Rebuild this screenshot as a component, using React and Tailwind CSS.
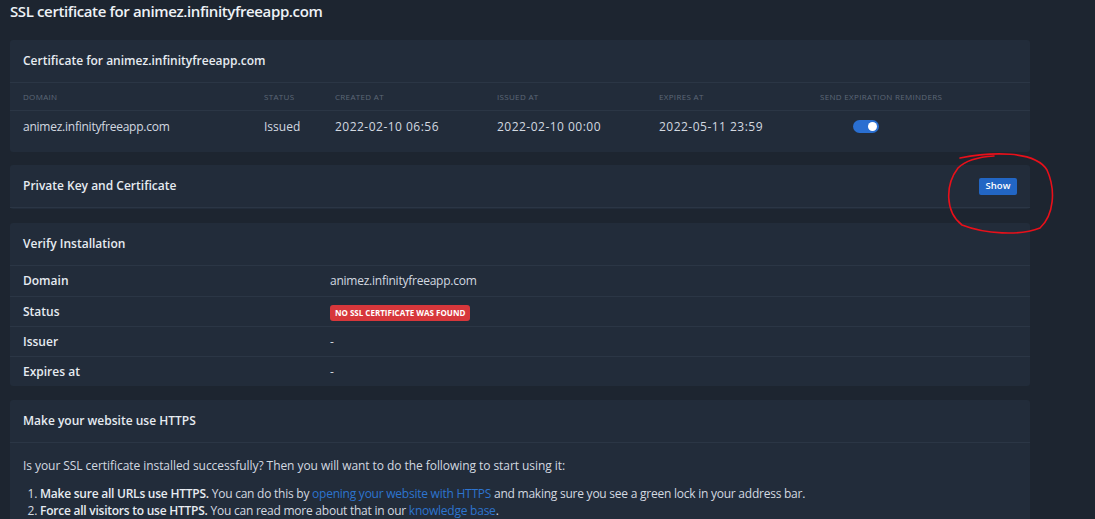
import React from "react";

const font = { fontFamily: '"Open Sans", "Noto Sans", sans-serif' };

const certRow = {
  domain: "animez.infinityfreeapp.com",
  status: "Issued",
  created: "2022-02-10 06:56",
  issued: "2022-02-10 00:00",
  expires: "2022-05-11 23:59",
};

const verifyRows = [
  { label: "Domain", value: "animez.infinityfreeapp.com" },
  { label: "Status", badge: "No SSL certificate was found" },
  { label: "Issuer", value: "-" },
  { label: "Expires at", value: "-" },
];

const CardHeader = ({ children, right }) => (
  <div className="flex h-[43px] items-center justify-between border-b border-[#2b3645] px-[13px]">
    <h2 className="text-[12px] font-semibold text-[#e6ebf1]">{children}</h2>
    {right}
  </div>
);

const Toggle = () => (
  <div className="ml-[33px] flex h-[13px] w-[26px] items-center justify-end rounded-full bg-[#2a6fd1] px-[2px]">
    <div className="h-[9px] w-[9px] rounded-full bg-white" />
  </div>
);

export default function App() {
  return (
    <div className="relative min-h-[519px] bg-[#1d2530] px-[10px] text-[#d3d9e0]" style={font}>
      <h1 className="flex h-[40px] items-start text-[15px] font-semibold leading-[22px] tracking-[-0.025em] text-[#eef2f6]">
        SSL certificate for animez.infinityfreeapp.com
      </h1>

      <div className="flex w-[1020px] flex-col gap-[14px]">
        {/* Certificate */}
        <div className="-mb-[1px] rounded-[3px] bg-[#222c3a] pb-[10px]">
          <CardHeader>Certificate for animez.infinityfreeapp.com</CardHeader>
          <div className="grid grid-cols-[241px_71px_162px_162px_161px_1fr] px-[13px] text-[8px] uppercase tracking-[0.04em] text-[#5d6877]">
            <div className="flex h-[27px] items-center">Domain</div>
            <div className="flex h-[27px] items-center">Status</div>
            <div className="flex h-[27px] items-center">Created at</div>
            <div className="flex h-[27px] items-center">Issued at</div>
            <div className="flex h-[27px] items-center">Expires at</div>
            <div className="flex h-[27px] items-center">Send expiration reminders</div>
          </div>
          <div className="grid h-[32px] grid-cols-[241px_71px_162px_162px_161px_1fr] items-center border-t border-[#2b3645] px-[13px] text-[12px]">
            <div className="tracking-[-0.02em]">{certRow.domain}</div>
            <div>{certRow.status}</div>
            <div className="tracking-[0.04em]">{certRow.created}</div>
            <div className="tracking-[0.04em]">{certRow.issued}</div>
            <div className="tracking-[0.04em]">{certRow.expires}</div>
            <div>
              <Toggle />
            </div>
          </div>
        </div>

        {/* Private key */}
        <div className="rounded-[3px] bg-[#222c3a] pb-[1px]">
          <CardHeader
            right={
              <button className="h-[17px] w-[38px] rounded-[2px] bg-[#2266c4] text-[9.5px] font-semibold text-white">
                Show
              </button>
            }
          >
            Private Key and Certificate
          </CardHeader>
        </div>

        {/* Verify */}
        <div className="rounded-[3px] bg-[#222c3a]">
          <CardHeader>Verify Installation</CardHeader>
          {verifyRows.map((row, i) => (
            <div
              key={row.label}
              className={
                "grid h-[30px] grid-cols-[307px_1fr] items-center px-[13px] text-[12px] " +
                (i > 0 ? "border-t border-[#2b3645]" : "")
              }
            >
              <div className="font-semibold text-[#e6ebf1]">{row.label}</div>
              <div className="tracking-[-0.02em]">
                {row.badge ? (
                  <span className="inline-flex h-[16px] items-center rounded-[3px] bg-[#d7373b] px-[5px] text-[8px] font-bold uppercase tracking-normal text-white">
                    {row.badge}
                  </span>
                ) : (
                  row.value
                )}
              </div>
            </div>
          ))}
        </div>

        {/* HTTPS */}
        <div className="rounded-[3px] bg-[#222c3a]">
          <CardHeader>Make your website use HTTPS</CardHeader>
          <div className="px-[13px] pt-[14px] pb-[16px] text-[12px]">
            <p className="leading-[17px] tracking-[-0.005em]">
              Is your SSL certificate installed successfully? Then you will want to do the following to start using it:
            </p>
            <ol className="mt-[11px] list-decimal pl-[17px] leading-[17px] tracking-[-0.02em]">
              <li>
                <strong className="font-semibold text-[#e6ebf1]">Make sure all URLs use HTTPS.</strong> You can do this by{" "}
                <a className="text-[#2d74cf]">opening your website with HTTPS</a> and making sure you see a green lock in your
                address bar.
              </li>
              <li>
                <strong className="font-semibold text-[#e6ebf1]">Force all visitors to use HTTPS.</strong> You can read more
                about that in our <a className="text-[#2d74cf]">knowledge base</a>.
              </li>
            </ol>
          </div>
        </div>
      </div>

      {/* hand-drawn annotation */}
      <svg
        className="pointer-events-none absolute left-0 top-0"
        width="1095"
        height="519"
        viewBox="0 0 1095 519"
        fill="none"
      >
        <path
          d="M960 158 C990 152 1035 150 1047 170 C1056 190 1054 215 1040 228 C1020 236 985 234 962 225 C945 212 945 185 958 168 C966 160 978 157 994 156"
          stroke="#e8101a"
          strokeWidth="1.6"
          strokeLinecap="round"
        />
      </svg>
    </div>
  );
}
